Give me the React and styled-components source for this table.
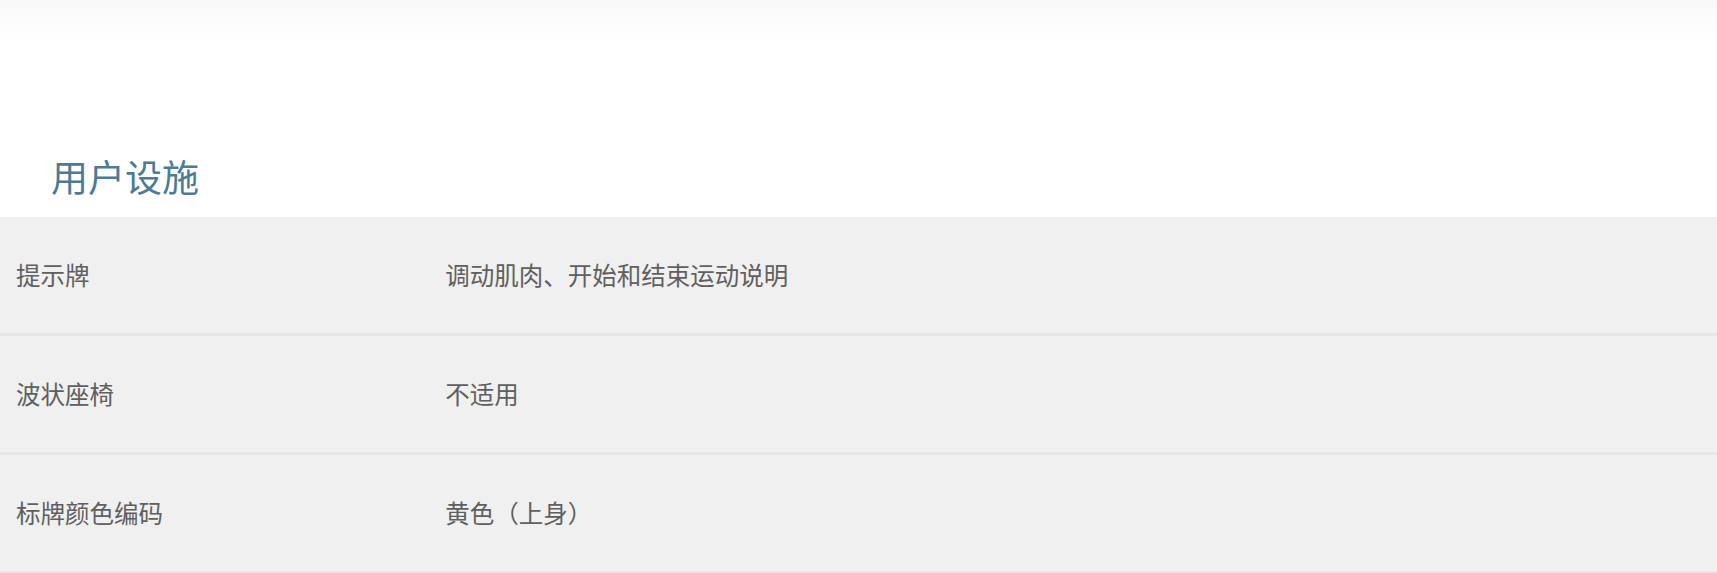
import React from 'react';
import styled, { createGlobalStyle } from 'styled-components';

const GlobalStyle = createGlobalStyle`
  html, body {
    margin: 0;
    padding: 0;
    background: #fff;
  }
  body {
    font-family: "Noto Sans CJK SC", "Noto Sans", sans-serif;
  }
`;

const Page = styled.div`
  display: flex;
  flex-direction: column;
  width: 100%;
`;

const HeaderShade = styled.div`
  height: 38px;
  background: linear-gradient(to bottom, #f9f9f9, #ffffff);
`;

const SectionTitle = styled.h2`
  margin: 116px 0 19px 0;
  padding-left: 51px;
  font-size: 37px;
  line-height: 44px;
  font-weight: 400;
  color: #4b7b95;
`;

const SpecTable = styled.div`
  display: flex;
  flex-direction: column;
  background: #f0f0f0;
`;

const SpecRow = styled.div`
  display: grid;
  grid-template-columns: 25% 75%;
  align-items: center;
  height: 116px;
  border-bottom: 3px solid #e6e6e6;
`;

const Cell = styled.div`
  padding: 0 16px;
  font-size: 24.5px;
  line-height: 32px;
  color: #5f5f5f;
`;

const rows = [
  { label: '提示牌', value: '调动肌肉、开始和结束运动说明' },
  { label: '波状座椅', value: '不适用' },
  { label: '标牌颜色编码', value: '黄色（上身）' },
];

function App() {
  return (
    <Page>
      <GlobalStyle />
      <HeaderShade />
      <SectionTitle>用户设施</SectionTitle>
      <SpecTable>
        {rows.map(row => (
          <SpecRow key={row.label}>
            <Cell>{row.label}</Cell>
            <Cell>{row.value}</Cell>
          </SpecRow>
        ))}
      </SpecTable>
    </Page>
  );
}

export default App;
